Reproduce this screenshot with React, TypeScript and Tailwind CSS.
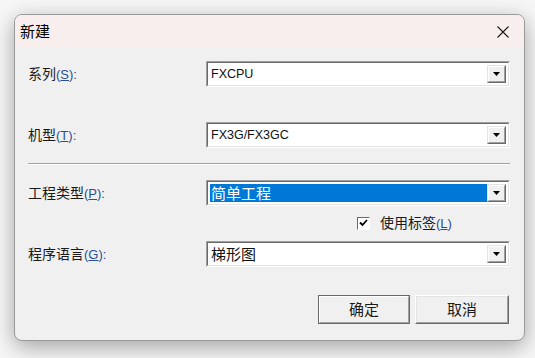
const cjk = { fontFamily: '"Noto Sans CJK SC", "Noto Sans", sans-serif' };
const latin = { fontFamily: '"Liberation Sans", "Noto Sans CJK SC", sans-serif' };

function Mnemonic({ letter, colon = true }: { letter: string; colon?: boolean }) {
  return (
    <span className="text-[13px] text-[#2b4f93]" style={latin}>
      (<span className="underline underline-offset-1">{letter}</span>){colon ? ':' : ''}
    </span>
  );
}

function Combo({ value, selected, latinText }: { value: string; selected?: boolean; latinText?: boolean }) {
  return (
    <div className="flex h-[26px] flex-1 border border-t-[#a0a0a0] border-l-[#a0a0a0] border-b-white border-r-white">
      <div className="flex flex-1 border border-t-[#696969] border-l-[#696969] border-b-[#e3e3e3] border-r-[#e3e3e3] bg-white p-[2px]">
        <div
          className={`flex flex-1 items-center pl-[1px] ${
            selected ? 'bg-[#0078d7] text-white' : 'text-[#111]'
          } ${latinText ? 'text-[12.5px]' : 'text-[15px]'}`}
          style={latinText ? latin : cjk}
        >
          {value}
        </div>
        <div className="flex w-[19px] border border-t-[#e3e3e3] border-l-[#e3e3e3] border-b-[#696969] border-r-[#696969] bg-[#f0f0f0]">
          <div className="flex flex-1 items-center justify-center border border-t-white border-l-white border-b-[#a0a0a0] border-r-[#a0a0a0]">
            <svg width="7" height="4" viewBox="0 0 7 4">
              <path d="M0 0h7L3.5 4z" fill="#000" />
            </svg>
          </div>
        </div>
      </div>
    </div>
  );
}

function Row({ label, letter, children }: { label: string; letter: string; children: React.ReactNode }) {
  return (
    <div className="flex items-center">
      <div className="w-[178px] text-[14px] text-[#1a1a1a]" style={cjk}>
        {label}
        <Mnemonic letter={letter} />
      </div>
      {children}
    </div>
  );
}

export default function App() {
  return (
    <div className="h-[358px] w-[535px] bg-[#f7f7f7] pl-[14px] pt-[14px]">
      <div className="flex h-[327px] w-[511px] flex-col overflow-hidden rounded-[8px] border border-[#9a9a9a] bg-[#f0f0f0] shadow-[0_6px_22px_rgba(0,0,0,0.35)]">
        <div className="flex h-[33px] items-center justify-between bg-[#f8eeee] pl-[5px] pr-[15px]">
          <span className="text-[15px] text-black" style={cjk}>
            新建
          </span>
          <svg width="12" height="12" viewBox="0 0 12 12">
            <path d="M0.5 0.5L11.5 11.5M11.5 0.5L0.5 11.5" stroke="#1a1a1a" strokeWidth="1.1" />
          </svg>
        </div>

        <div className="flex flex-1 flex-col pl-[13px] pr-[14px] pt-[13px]">
          <Row label="系列" letter="S">
            <Combo value="FXCPU" latinText />
          </Row>
          <div className="mt-[35px]">
            <Row label="机型" letter="T">
              <Combo value="FX3G/FX3GC" latinText />
            </Row>
          </div>

          <div className="mt-[15px] h-[2px] border-t border-t-[#a0a0a0] border-b border-b-white" />

          <div className="mt-[15px]">
            <Row label="工程类型" letter="P">
              <Combo value="简单工程" selected />
            </Row>
          </div>

          <div className="mt-[10px] flex h-[14px] items-center pl-[329px]">
            <div className="flex h-[13px] w-[13px] items-center justify-center border border-t-[#696969] border-l-[#696969] border-b-white border-r-white bg-white">
              <svg width="9" height="8" viewBox="0 0 9 8">
                <path d="M1 3.5L3.5 6L8 1" stroke="#000" strokeWidth="1.8" fill="none" />
              </svg>
            </div>
            <span className="ml-[10px] text-[14px] text-[#1a1a1a]" style={cjk}>
              使用标签
              <Mnemonic letter="L" colon={false} />
            </span>
          </div>

          <div className="mt-[11px]">
            <Row label="程序语言" letter="G">
              <Combo value="梯形图" />
            </Row>
          </div>

          <div className="mt-[28px] flex justify-end gap-[5px] pr-[1px]">
            <button
              type="button"
              className="flex h-[29px] w-[92px] items-center justify-center border border-[#6a6a6a] bg-[#f0f0f0] text-[15px] text-[#1a1a1a]"
              style={cjk}
            >
              <span className="flex h-full w-full items-center justify-center border border-t-white border-l-white border-b-[#a0a0a0] border-r-[#a0a0a0]">
                确定
              </span>
            </button>
            <button
              type="button"
              className="flex h-[29px] w-[94px] items-center justify-center border border-t-white border-l-white border-b-[#696969] border-r-[#696969] bg-[#f0f0f0] text-[15px] text-[#1a1a1a]"
              style={cjk}
            >
              <span className="flex h-full w-full items-center justify-center border border-t-[#e3e3e3] border-l-[#e3e3e3] border-b-[#a0a0a0] border-r-[#a0a0a0]">
                取消
              </span>
            </button>
          </div>
        </div>
      </div>
    </div>
  );
}
